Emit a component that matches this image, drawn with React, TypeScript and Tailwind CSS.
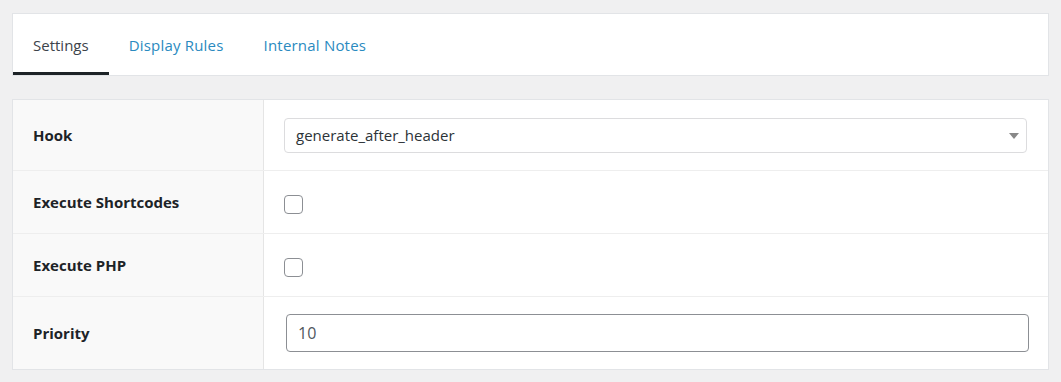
import React from "react";

const font = { fontFamily: '"Open Sans", "Noto Sans", Arial, sans-serif' };

function Row({
  label,
  h,
  last,
  children,
}: {
  label: string;
  h: string;
  last?: boolean;
  children: React.ReactNode;
}) {
  return (
    <div className={`flex ${h} ${last ? "" : "border-b border-[#eeeeee]"}`}>
      <div className="w-[251px] shrink-0 bg-[#f9f9f9] border-r border-[#e5e5e5] flex items-center pl-[20px]">
        <span className="text-[15px] font-bold text-[#1d2327]">{label}</span>
      </div>
      <div className="flex-1 bg-white flex items-center pl-[20px] pr-[21px]">{children}</div>
    </div>
  );
}

function Checkbox() {
  return (
    <div className="mt-[5px] w-[19px] h-[19px] rounded-[4px] border border-[#8c8f94] bg-white" />
  );
}

export default function App() {
  return (
    <div className="min-h-screen bg-[#f0f0f1] pt-[13px] px-[12px]" style={font}>
      <div className="bg-white border border-[#e2e4e7] h-[63px] flex items-stretch">
        <div className="px-[20px] flex items-center border-b-[3px] border-[#1d2327] pt-[5px] text-[15px] text-[#3c434a]">
          Settings
        </div>
        <div className="px-[20px] flex items-center pt-[2px] text-[15px] tracking-[0.2px] text-[#2a8ac0]">
          Display Rules
        </div>
        <div className="px-[20px] flex items-center pt-[2px] text-[15px] tracking-[0.2px] text-[#2a8ac0]">
          Internal Notes
        </div>
      </div>

      <div className="mt-[23px] border border-[#e2e4e7] bg-white">
        <Row label="Hook" h="h-[71px]">
          <div className="w-full h-[35px] border border-[#dcdcde] rounded-[4px] flex items-center pl-[11px] pr-[8px] relative bg-white">
            <span className="text-[15px] text-[#2c3338]">generate_after_header</span>
            <svg
              className="absolute right-[7px] top-[14px]"
              width="10"
              height="6"
              viewBox="0 0 10 6"
            >
              <path d="M0 0 H10 L5 6 Z" fill="#888888" />
            </svg>
          </div>
        </Row>
        <Row label="Execute Shortcodes" h="h-[63px]">
          <Checkbox />
        </Row>
        <Row label="Execute PHP" h="h-[63px]">
          <Checkbox />
        </Row>
        <Row label="Priority" h="h-[72px]" last>
          <div className="ml-[2px] mr-[-3px] w-full h-[38px] border border-[#8c8f94] rounded-[4px] flex items-center pl-[11px] bg-white">
            <span className="text-[16px] text-[#50575e]">10</span>
          </div>
        </Row>
      </div>
    </div>
  );
}
